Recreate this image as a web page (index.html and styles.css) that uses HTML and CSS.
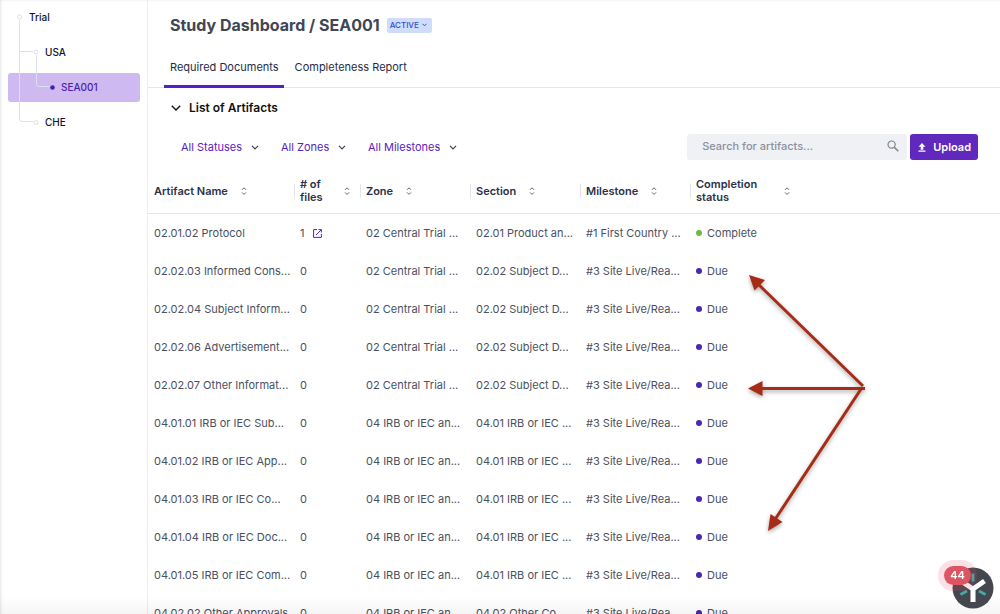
FILE: index.html
```html
<!DOCTYPE html>
<html lang="en">
<head>
    <meta charset="UTF-8">
    <meta name="viewport" content="width=device-width, initial-scale=1.0">
    <title>Study Dashboard / SEA001</title>
    <link rel="stylesheet" href="styles.css">
</head>
<body>
    <div class="app">
        <nav class="sidebar" aria-label="Study tree">
            <ul class="tree">
                <li><a class="node" href="#trial">Trial</a></li>
                <li><a class="node level-1" href="#usa">USA</a></li>
                <li><a class="node level-2 selected" href="#sea001" aria-current="page">SEA001</a></li>
                <li><a class="node level-1" href="#che">CHE</a></li>
            </ul>
            <svg class="tree-lines" width="60" height="130" viewBox="0 0 60 130" fill="none" stroke="#dcdfec">
                <path d="M19.5 20V119Q19.5 121.5 22 121.5H33M19.5 51.500H33M36.500 55V84Q36.500 86.500 39 86.500H50"/>
                <circle cx="19.500" cy="17" r="2" fill="#fff"/>
                <circle cx="36" cy="52" r="2" fill="#fff"/>
                <circle cx="36" cy="122.500" r="2" fill="#fff"/>
                <circle cx="52.500" cy="87.500" r="2.300" fill="#4a1fb0" stroke="none"/>
            </svg>
        </nav>

        <main class="main">
            <header class="page-header">
                <h1>Study Dashboard / SEA001</h1>
                <button class="badge" type="button">ACTIVE
                    <svg width="5" height="4" viewBox="0 0 5 4" fill="none" stroke="currentColor"><path d="M.5 .8l2 2 2-2"/></svg>
                </button>
            </header>

            <nav class="tabs">
                <a class="tab active" href="#documents">Required Documents</a>
                <a class="tab" href="#report">Completeness Report</a>
            </nav>

            <h2 class="section-title">
                <button type="button">
                    <svg width="10" height="6" viewBox="0 0 10 6" fill="none" stroke="currentColor" stroke-width="1.400"><path d="M.8 .8L5 5 9.200 .8"/></svg>
                    List of Artifacts
                </button>
            </h2>

            <div class="toolbar">
                <div class="filters">
                    <label class="filter">
                        <select aria-label="Status"><option>All Statuses</option></select>
                        <svg width="8" height="5" viewBox="0 0 8 5"><path d="M1 .8l3 3 3-3"/></svg>
                    </label>
                    <label class="filter">
                        <select aria-label="Zone"><option>All Zones</option></select>
                        <svg width="8" height="5" viewBox="0 0 8 5"><path d="M1 .8l3 3 3-3"/></svg>
                    </label>
                    <label class="filter">
                        <select aria-label="Milestone"><option>All Milestones</option></select>
                        <svg width="8" height="5" viewBox="0 0 8 5"><path d="M1 .8l3 3 3-3"/></svg>
                    </label>
                </div>
                <label class="search">
                    <input type="text" placeholder="Search for artifacts..." aria-label="Search for artifacts">
                    <svg width="12" height="12" viewBox="0 0 12 12" fill="none" stroke="#808590" stroke-width="1.200"><circle cx="4.600" cy="4.600" r="3.600"/><path d="M7.400 7.400l3.900 3.900" stroke-width="1.500"/></svg>
                </label>
                <button class="upload" type="button">
                    <svg width="8" height="9" viewBox="0 0 8 9" fill="#fff"><path d="M4 0L.6 3.700h2.100v3h2.600v-3h2.100zM.5 7.600h7v1.200h-7z"/></svg>
                    Upload
                </button>
            </div>

            <table class="artifacts">
                <colgroup>
                    <col class="col-name"><col class="col-files"><col class="col-text"><col class="col-text"><col class="col-text"><col>
                </colgroup>
                <thead>
                    <tr>
                        <th><div class="th"><span>Artifact Name</span></div></th>
                        <th><div class="th wrap"><span># of files</span></div></th>
                        <th><div class="th"><span>Zone</span></div></th>
                        <th><div class="th"><span>Section</span></div></th>
                        <th><div class="th"><span>Milestone</span></div></th>
                        <th><div class="th wrap"><span>Completion status</span></div></th>
                    </tr>
                </thead>
                <tbody id="rows"></tbody>
            </table>
        </main>
    </div>

    <svg class="arrows" width="140" height="280" viewBox="740 265 140 280" fill="#a62c17" stroke="#a62c17">
        <g stroke-width="3">
            <path d="M863 386L757 283"/>
            <path d="M865 388.500H758"/>
            <path d="M861 389L774 521"/>
        </g>
        <g stroke="none">
            <path d="M749 275l16 5-10.500 10.500z"/>
            <path d="M748 388.500l14.500-7.500v15z"/>
            <path d="M768 531l2.500-17 12 8z"/>
        </g>
    </svg>

    <div class="fade"></div>

    <button class="help" type="button" aria-label="Help center, 44 new">
        <svg width="42" height="42" viewBox="0 0 42 42" fill="none">
            <circle cx="21" cy="21" r="20.500" fill="#44474e"/>
            <path d="M21 35V22L10.500 15M21 22l11.500-8" stroke="#fff" stroke-width="5"/>
            <path d="M21 6.500v8M8.500 27.500l6.500-3.500M33.500 27.500L27 24" stroke="#45aaa5" stroke-width="2.800"/>
        </svg>
        <span class="count">44</span>
    </button>

    <script>
        const zone2 = '02 Central Trial ...';
        const zone4 = '04 IRB or IEC an...';
        const live = '#3 Site Live/Rea...';

        const artifacts = [
            ['02.01.02 Protocol', 1, zone2, '02.01 Product an...', '#1 First Country ...', 'Complete'],
            ['02.02.03 Informed Cons...', 0, zone2, '02.02 Subject D...', live, 'Due'],
            ['02.02.04 Subject Inform...', 0, zone2, '02.02 Subject D...', live, 'Due'],
            ['02.02.06 Advertisement...', 0, zone2, '02.02 Subject D...', live, 'Due'],
            ['02.02.07 Other Informat...', 0, zone2, '02.02 Subject D...', live, 'Due'],
            ['04.01.01 IRB or IEC Sub...', 0, zone4, '04.01 IRB or IEC ...', live, 'Due'],
            ['04.01.02 IRB or IEC App...', 0, zone4, '04.01 IRB or IEC ...', live, 'Due'],
            ['04.01.03 IRB or IEC Co...', 0, zone4, '04.01 IRB or IEC ...', live, 'Due'],
            ['04.01.04 IRB or IEC Doc...', 0, zone4, '04.01 IRB or IEC ...', live, 'Due'],
            ['04.01.05 IRB or IEC Com...', 0, zone4, '04.01 IRB or IEC ...', live, 'Due'],
            ['04.02.02 Other Approvals', 0, zone4, '04.02 Other Co...', live, 'Due']
        ];

        const openIcon = '<a class="open" href="#files" aria-label="Open files"><svg width="9" height="9" viewBox="0 0 9 9" fill="none" stroke="currentColor"><path d="M4 .6H.6v7.800h7.800V5M5.500 .6h2.900v2.900M8.300 .7L3 6"/></svg></a>';
        const sortIcon = '<svg class="sort" width="6" height="8" viewBox="0 0 6 8"><path d="M1 2.800l2-2 2 2M1 5.400l2 2 2-2"/></svg>';

        document.querySelectorAll('.th').forEach(th => th.insertAdjacentHTML('beforeend', sortIcon));

        document.getElementById('rows').innerHTML = artifacts.map(([name, files, zone, section, milestone, status]) => `
            <tr>
                <td>${name}</td>
                <td>${files}${files ? openIcon : ''}</td>
                <td>${zone}</td>
                <td>${section}</td>
                <td>${milestone}</td>
                <td><span class="status ${status.toLowerCase()}">${status}</span></td>
            </tr>
        `).join('');
    </script>
</body>
</html>
```
FILE: styles.css
```css
* { margin: 0; padding: 0; box-sizing: border-box; }
body { font-family: Inter, "Liberation Sans", sans-serif; font-size: 11px; line-height: 14px; color: #4a5060; background: #fff; height: 100vh; overflow: hidden; }
button, input, select { font: inherit; color: inherit; border: none; background: none; }
button, select { cursor: pointer; }
a { color: inherit; text-decoration: none; }
svg { flex-shrink: 0; }

.app { display: grid; grid-template-columns: 148px 1fr; height: 100vh; overflow: hidden; box-shadow: inset 3px 2px 3px -2px #e4e4e6; }

/* sidebar */
.sidebar { position: relative; padding: 3px 7px 3px 8px; border-right: 1px solid #ececf1; }
.tree { list-style: none; display: flex; flex-direction: column; gap: 6px; }
.node { display: flex; align-items: center; height: 29px; padding: 0 0 2px 21px; border-radius: 3px; font-size: 10px; font-weight: 500; color: #0c1330; }
.level-1 { padding-left: 37px; }
.level-2 { padding-left: 53px; }
.selected { background: #cfb9f1; color: #4a1fa8; }
.tree-lines { position: absolute; left: 0; top: 0; pointer-events: none; }

/* header */
.page-header { display: flex; align-items: center; gap: 7px; height: 50px; padding-left: 22px; }
.page-header h1 { font-size: 16px; line-height: 22px; font-weight: 700; color: #3f4654; }
.badge { display: flex; align-items: center; gap: 3px; height: 15px; padding: 0 5px 0 3px; border-radius: 2px; background: #cfdcfc; color: #3050d0; font-size: 8px; font-weight: 500; }
.tabs { display: flex; gap: 5px; height: 38px; padding-left: 16px; border-bottom: 1px solid #e5e5ea; }
.tab { height: 38px; padding: 10px 5px 0 6px; color: #262c45; }
.tab.active { border-bottom: 3px solid #561ec4; }
.section-title { display: flex; align-items: center; height: 40px; padding-left: 23px; }
.section-title button { display: flex; align-items: center; gap: 8px; font-size: 12px; font-weight: 600; color: #111; }

/* toolbar */
.toolbar { display: flex; align-items: center; height: 38px; padding-right: 22px; }
.filters { display: flex; gap: 22px; padding-left: 33px; margin-right: auto; }
.filter { display: flex; align-items: center; gap: 8px; }
.filter select { appearance: none; color: #5a22bd; outline: none; }
.filter svg { fill: none; stroke: #3c4356; stroke-width: 1.2; }
.search { display: flex; align-items: center; width: 220px; height: 26px; padding: 0 8px 2px 15px; border-radius: 3px; background: #f0f1f5; }
.search input { flex: 1; min-width: 0; outline: none; font-weight: 500; }
.search input::placeholder { color: #8a90a0; opacity: 1; }
.upload { display: flex; align-items: center; gap: 7px; height: 26px; margin-left: 3px; padding: 0 7px 0 8px; border-radius: 3px; background: #6128bd; color: #fff; font-weight: 600; }

/* table */
.artifacts { width: 100%; table-layout: fixed; border-collapse: collapse; }
.col-name { width: 146px; }
.col-files { width: 66px; }
.col-text { width: 110px; }
.artifacts th { height: 47px; padding: 4px 0 0; border-bottom: 1px solid #e4e4ee; text-align: left; font-weight: 600; line-height: 13px; color: #2b3148; }
.th { display: flex; align-items: center; gap: 13px; padding-left: 6px; }
.th.wrap { justify-content: space-between; max-width: 100px; padding-right: 10px; }
th:last-child .th { max-width: 100px; padding-right: 0; }
th + th .th { border-left: 1px solid #e4e4ee; height: 14px; padding-left: 5px; }
.sort { fill: none; stroke: #5c6272; stroke-width: 1; }
.artifacts td { height: 38px; padding: 2px 0 0 6px; white-space: nowrap; }
.open { display: inline-block; margin-left: 9px; color: #5a22bd; vertical-align: -1px; }
.open svg { display: block; }
.status { display: flex; align-items: center; gap: 5px; }
.status::before { content: ""; width: 6px; height: 6px; border-radius: 50%; background: #4a28b0; }
.status.complete::before { background: #6cb944; }

/* overlays */
.arrows { position: absolute; left: 740px; top: 265px; pointer-events: none; filter: drop-shadow(0 2px 2px rgba(0,0,0,0.35)); }
.fade { position: fixed; left: 0; right: 0; bottom: 0; height: 18px; background: linear-gradient(rgba(0,0,0,0), rgba(0,0,0,0.04)); pointer-events: none; }
.help { position: fixed; right: 6px; bottom: 5px; width: 42px; height: 42px; border-radius: 50%; }
.help svg { display: block; }
.count { position: absolute; left: -8px; top: -1px; width: 27px; height: 19px; border-radius: 10px; background: #dd5562; box-shadow: 0 0 0 6px rgba(230,80,100,0.17); color: #fff; font-weight: 600; line-height: 19px; text-align: center; }
```
